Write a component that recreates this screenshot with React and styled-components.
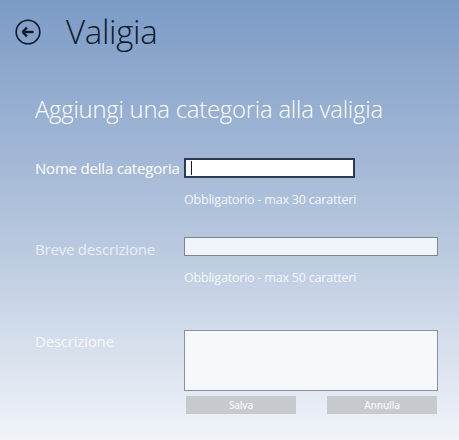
import React from "react";
import styled, { createGlobalStyle } from "styled-components";

const GlobalStyle = createGlobalStyle`
  html, body {
    margin: 0;
    padding: 0;
  }
  body {
    font-family: "Open Sans", "Liberation Sans", sans-serif;
  }
`;

const Page = styled.div`
  width: 459px;
  height: 440px;
  overflow: hidden;
  background: linear-gradient(180deg, #7b9bc6 0%, #b2c3dc 50%, #f1f4f9 100%);
  box-sizing: border-box;
`;

const Header = styled.header`
  display: flex;
  align-items: center;
  height: 66px;
  padding-left: 15px;
  gap: 25px;
`;

const BackButton = styled.button`
  width: 26px;
  height: 26px;
  padding: 0;
  border: none;
  background: none;
  display: flex;
  align-items: center;
  justify-content: center;
  cursor: pointer;
  margin-top: -2px;
`;

const Title = styled.h1`
  margin: 0;
  font-weight: 300;
  font-size: 33px;
  color: #0f1a2c;
  letter-spacing: -0.3px;
  margin-top: -3px;
`;

const Section = styled.section`
  padding: 28px 0 0 35px;
`;

const SubTitle = styled.h2`
  margin: 0 0 33px;
  font-weight: 300;
  font-size: 23.8px;
  line-height: 31px;
  color: #ffffff;
  letter-spacing: -0.2px;
`;

const Form = styled.form`
  display: grid;
  grid-template-columns: 149px 254px;
  align-items: start;
`;

const Label = styled.label`
  font-size: 15px;
  font-weight: 400;
  color: ${(p) => p.$color};
  line-height: 20px;
  letter-spacing: -0.2px;
  white-space: nowrap;
  padding-top: ${(p) => p.$top || 0}px;
`;

const Field = styled.div`
  display: flex;
  flex-direction: column;
  margin-bottom: ${(p) => p.$gap}px;
`;

const TextInput = styled.input`
  box-sizing: border-box;
  width: ${(p) => p.$width}px;
  height: ${(p) => (p.$active ? 20 : 19)}px;
  margin: 0;
  padding: 0 6px;
  font-family: inherit;
  font-size: 12px;
  outline: none;
  background: ${(p) => (p.$active ? "#ffffff" : "#f1f5fa")};
  border: ${(p) => (p.$active ? "2px solid #2e3b4e" : "1px solid #7c8594")};
  border-radius: 0;
  display: block;
`;

const Caret = styled.span`
  position: absolute;
  left: 7px;
  top: 3px;
  width: 1px;
  height: 14px;
  background: #1a1a1a;
`;

const InputWrap = styled.div`
  position: relative;
`;

const Hint = styled.div`
  font-size: 12.5px;
  line-height: 16px;
  color: #f4f7fb;
  margin-top: 14px;
  letter-spacing: -0.2px;
`;

const TextArea = styled.textarea`
  box-sizing: border-box;
  width: 254px;
  height: 61px;
  margin: 0;
  resize: none;
  font-family: inherit;
  background: #f6f8fb;
  border: 1px solid #8a929e;
  border-radius: 0;
  outline: none;
  display: block;
`;

const Buttons = styled.div`
  display: flex;
  justify-content: space-between;
  padding: 5px 1px 0 2px;
`;

const Button = styled.button`
  width: 110px;
  height: 18px;
  border: none;
  background: #c6c9cd;
  color: #f4f6f8;
  font-family: inherit;
  font-size: 10px;
  font-weight: 600;
  padding: 0;
  letter-spacing: -0.2px;
`;

function BackIcon() {
  return (
    <svg width="26" height="26" viewBox="0 0 26 26">
      <circle cx="13" cy="13" r="11.8" fill="none" stroke="#0f1a2c" strokeWidth="1.6" />
      <path
        d="M7.5 13 H18.5 M7.5 13 L12 8.5 M7.5 13 L12 17.5"
        fill="none"
        stroke="#0f1a2c"
        strokeWidth="2.4"
        strokeLinecap="butt"
        strokeLinejoin="miter"
      />
    </svg>
  );
}

export default function App() {
  return (
    <>
      <GlobalStyle />
      <Page>
        <Header>
          <BackButton aria-label="Indietro">
            <BackIcon />
          </BackButton>
          <Title>Valigia</Title>
        </Header>
        <Section>
          <SubTitle>Aggiungi una categoria alla valigia</SubTitle>
          <Form onSubmit={(e) => e.preventDefault()}>
            <Label $color="#ffffff">Nome della categoria</Label>
            <Field $gap={29}>
              <InputWrap>
                <TextInput $width={171} $active />
                <Caret />
              </InputWrap>
              <Hint>Obbligatorio - max 30 caratteri</Hint>
            </Field>

            <Label $color="#e8eef6" $top={2}>
              Breve descrizione
            </Label>
            <Field $gap={44}>
              <TextInput $width={254} />
              <Hint>Obbligatorio - max 50 caratteri</Hint>
            </Field>

            <Label $color="#f6f8fb" $top={1}>
              Descrizione
            </Label>
            <Field $gap={0}>
              <TextArea />
              <Buttons>
                <Button type="submit">Salva</Button>
                <Button type="button">Annulla</Button>
              </Buttons>
            </Field>
          </Form>
        </Section>
      </Page>
    </>
  );
}
